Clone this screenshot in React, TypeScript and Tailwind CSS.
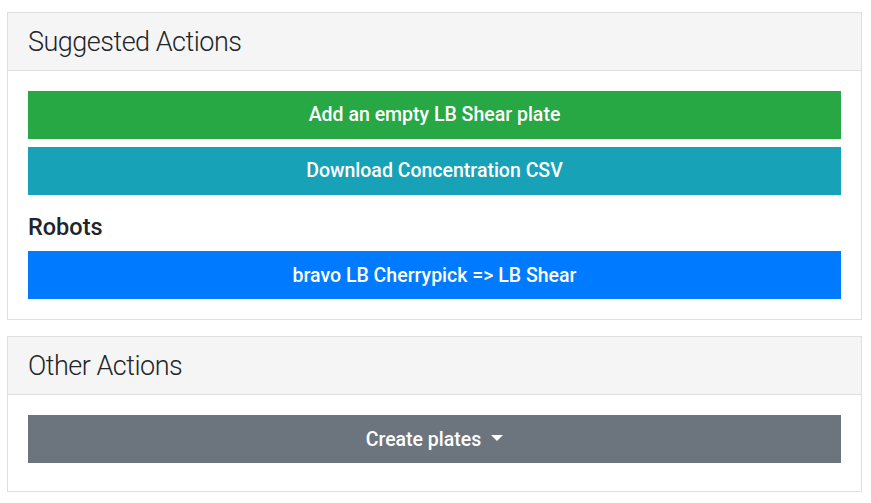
export default function App() {
  return (
    <main
      className="min-h-screen bg-white pl-[7px] pr-[9px] pt-[12px] text-[#212529]"
      style={{ fontFamily: '"Helvetica Neue", Roboto, "Liberation Sans", Arial, sans-serif' }}
    >
      <section className="border border-[#dfdfdf] bg-white">
        <div className="flex h-[58px] items-center border-b border-[#dfdfdf] bg-[#f5f5f5] px-5 pt-[2px]">
          <h3 className="m-0 text-[27px] font-light leading-[1.2] tracking-[-0.5px]">Suggested Actions</h3>
        </div>
        <div className="flex flex-col p-5">
          <button className="h-12 w-full bg-[#28a745] text-[19.5px] font-medium text-white">
            Add an empty LB Shear plate
          </button>
          <button className="mt-2 h-12 w-full bg-[#17a2b8] text-[19.5px] font-medium text-white">
            Download Concentration CSV
          </button>
          <h4 className="mb-[10px] mt-[18px] text-[23.5px] font-medium leading-[1.2]">Robots</h4>
          <button className="h-12 w-full bg-[#007bff] text-[19.5px] font-medium text-white">
            bravo LB Cherrypick =&gt; LB Shear
          </button>
        </div>
      </section>

      <section className="mt-4 border border-[#dfdfdf] bg-white">
        <div className="flex h-[58px] items-center border-b border-[#dfdfdf] bg-[#f5f5f5] px-5 pt-[2px]">
          <h3 className="m-0 text-[27px] font-light leading-[1.2] tracking-[-0.5px]">Other Actions</h3>
        </div>
        <div className="p-5 pb-7">
          <button className="flex h-12 w-full items-center justify-center bg-[#6c757d] text-[19.5px] font-medium text-white">
            Create plates
            <span className="ml-[10px] mt-[-2px] h-0 w-0 border-l-[6px] border-r-[6px] border-t-[6px] border-l-transparent border-r-transparent border-t-white" />
          </button>
        </div>
      </section>
    </main>
  );
}
